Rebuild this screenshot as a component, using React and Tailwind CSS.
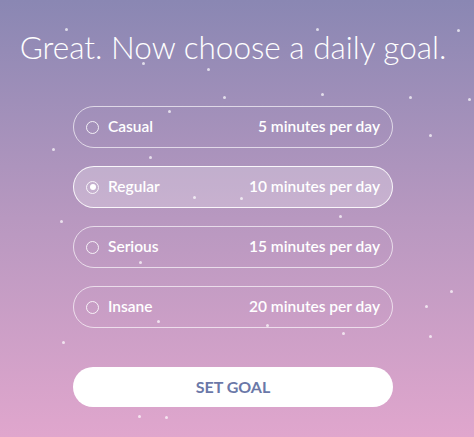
import React from "react";

const stars = [
  [66, 29], [317, 29], [458, 30], [143, 63], [208, 69], [224, 97], [322, 94], [410, 97], [469, 99],
  [169, 111], [430, 135], [53, 149], [150, 157], [194, 197], [241, 198], [340, 216], [61, 221],
  [140, 262], [451, 291], [426, 306], [158, 321], [267, 325], [343, 333], [430, 336], [63, 342],
  [139, 416], [166, 417],
];

const options = [
  { name: "Casual", time: "5 minutes per day" },
  { name: "Regular", time: "10 minutes per day", selected: true },
  { name: "Serious", time: "15 minutes per day" },
  { name: "Insane", time: "20 minutes per day" },
];

export default function App() {
  return (
    <div
      className="relative w-[474px] h-[437px] overflow-hidden bg-gradient-to-b from-[#8a87b3] via-[#b898c0] to-[#e0a6cd] text-white"
      style={{ fontFamily: "Lato, 'Open Sans', sans-serif" }}
    >
      {stars.map(([x, y], i) => (
        <div
          key={i}
          className="absolute w-[3px] h-[3px] rounded-full bg-white/70"
          style={{ left: x - 1, top: y - 1 }}
        />
      ))}
      <div className="relative flex flex-col items-center pr-[8px]">
        <h1 className="mt-[27px] text-[31.5px] leading-[40px] font-light whitespace-nowrap">
          Great. Now choose a daily goal.
        </h1>
        <div className="mt-[39px] flex flex-col gap-[18px] w-[320px]">
          {options.map((o) => (
            <div
              key={o.name}
              className={`h-[42px] rounded-full border-[1.5px] flex items-center pl-[12px] pr-[12px] text-[15.5px] font-semibold ${
                o.selected ? "border-white/90 bg-white/25" : "border-white/65"
              }`}
            >
              <div className="w-[13px] h-[13px] rounded-full border-[1.5px] border-white/85 flex items-center justify-center">
                {o.selected && <div className="w-[6px] h-[6px] rounded-full bg-white" />}
              </div>
              <span className="ml-[9px]">{o.name}</span>
              <span className="ml-auto">{o.time}</span>
            </div>
          ))}
        </div>
        <button className="mt-[39px] w-[320px] h-[40px] rounded-full bg-white text-[#6b78a8] text-[16px] font-bold">
          SET GOAL
        </button>
      </div>
    </div>
  );
}
